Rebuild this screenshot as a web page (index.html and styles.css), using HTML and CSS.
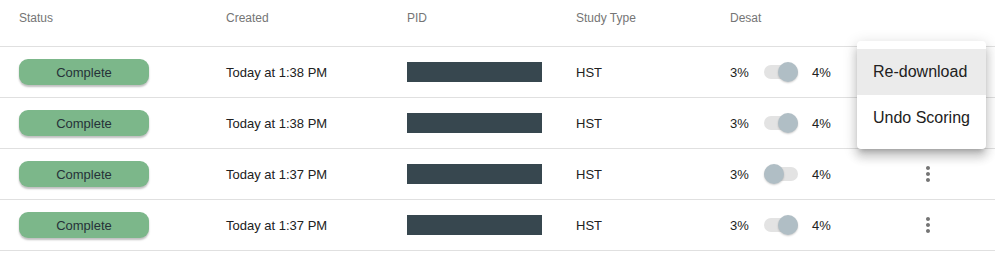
FILE: index.html
```html
<!DOCTYPE html>
<html>
<head>
<meta charset="utf-8">
<link rel="stylesheet" href="styles.css">
</head>
<body>
<div class="page">
  <div class="table">
    <div class="row head">
      <div class="cell">Status</div>
      <div class="cell">Created</div>
      <div class="cell">PID</div>
      <div class="cell">Study Type</div>
      <div class="cell">Desat</div>
      <div class="cell"></div>
    </div>
    <div class="row">
      <div class="cell"><span class="chip">Complete</span></div>
      <div class="cell">Today at 1:38 PM</div>
      <div class="cell"><span class="pid"></span></div>
      <div class="cell">HST</div>
      <div class="cell desat"><span class="pct">3%</span><span class="switch on"><span class="track"></span><span class="thumb"></span></span><span class="pct">4%</span></div>
      <div class="cell"><svg class="kebab" viewBox="0 0 24 24"><path d="M12 8c1.1 0 2-.9 2-2s-.9-2-2-2-2 .9-2 2 .9 2 2 2zm0 2c-1.1 0-2 .9-2 2s.9 2 2 2 2-.9 2-2-.9-2-2-2zm0 6c-1.1 0-2 .9-2 2s.9 2 2 2 2-.9 2-2-.9-2-2-2z"/></svg></div>
    </div>
    <div class="row">
      <div class="cell"><span class="chip">Complete</span></div>
      <div class="cell">Today at 1:38 PM</div>
      <div class="cell"><span class="pid"></span></div>
      <div class="cell">HST</div>
      <div class="cell desat"><span class="pct">3%</span><span class="switch on"><span class="track"></span><span class="thumb"></span></span><span class="pct">4%</span></div>
      <div class="cell"><svg class="kebab" viewBox="0 0 24 24"><path d="M12 8c1.1 0 2-.9 2-2s-.9-2-2-2-2 .9-2 2 .9 2 2 2zm0 2c-1.1 0-2 .9-2 2s.9 2 2 2 2-.9 2-2-.9-2-2-2zm0 6c-1.1 0-2 .9-2 2s.9 2 2 2 2-.9 2-2-.9-2-2-2z"/></svg></div>
    </div>
    <div class="row">
      <div class="cell"><span class="chip">Complete</span></div>
      <div class="cell">Today at 1:37 PM</div>
      <div class="cell"><span class="pid"></span></div>
      <div class="cell">HST</div>
      <div class="cell desat"><span class="pct">3%</span><span class="switch"><span class="track"></span><span class="thumb"></span></span><span class="pct">4%</span></div>
      <div class="cell"><svg class="kebab" viewBox="0 0 24 24"><path d="M12 8c1.1 0 2-.9 2-2s-.9-2-2-2-2 .9-2 2 .9 2 2 2zm0 2c-1.1 0-2 .9-2 2s.9 2 2 2 2-.9 2-2-.9-2-2-2zm0 6c-1.1 0-2 .9-2 2s.9 2 2 2 2-.9 2-2-.9-2-2-2z"/></svg></div>
    </div>
    <div class="row">
      <div class="cell"><span class="chip">Complete</span></div>
      <div class="cell">Today at 1:37 PM</div>
      <div class="cell"><span class="pid"></span></div>
      <div class="cell">HST</div>
      <div class="cell desat"><span class="pct">3%</span><span class="switch on"><span class="track"></span><span class="thumb"></span></span><span class="pct">4%</span></div>
      <div class="cell"><svg class="kebab" viewBox="0 0 24 24"><path d="M12 8c1.1 0 2-.9 2-2s-.9-2-2-2-2 .9-2 2 .9 2 2 2zm0 2c-1.1 0-2 .9-2 2s.9 2 2 2 2-.9 2-2-.9-2-2-2zm0 6c-1.1 0-2 .9-2 2s.9 2 2 2 2-.9 2-2-.9-2-2-2z"/></svg></div>
    </div>
  </div>
  <div class="menu">
    <div class="item active">Re-download</div>
    <div class="item">Undo Scoring</div>
  </div>
</div>
</body>
</html>
```

FILE: styles.css
```css
* { box-sizing: border-box; }
html, body { margin: 0; padding: 0; background: #fff; }
body { font-family: "Liberation Sans", Arial, sans-serif; color: #212121; }
.page { position: relative; width: 995px; height: 258px; }
.table { width: 995px; }
.row {
  display: grid;
  grid-template-columns: 207px 181px 169px 154px 186px 24px 1fr;
  padding-left: 19px;
  height: 51px;
  border-bottom: 1px solid #e0e0e0;
  align-items: center;
  font-size: 13px;
}
.row.head { height: 47px; font-size: 12px; color: #757575; align-items: start; padding-top: 11px; }
.cell { display: flex; align-items: center; }
.chip {
  display: flex; align-items: center; justify-content: center;
  width: 130px; height: 26px; border-radius: 9px;
  background: #7cb78a; color: #263238; font-size: 13px;
  box-shadow: 0 2px 2px rgba(0,0,0,0.25);
}
.pid { display: block; width: 135px; height: 20px; background: #37474f; }
.desat { gap: 0; }
.pct { width: 34px; font-size: 13px; }
.switch { position: relative; width: 34px; height: 20px; margin-right: 14px; display: block; }
.track { position: absolute; left: 0; top: 3px; width: 34px; height: 14px; border-radius: 7px; background: #e3e3e3; }
.thumb {
  position: absolute; top: 0; left: 0; width: 20px; height: 20px; border-radius: 50%;
  background: #b0bec5; box-shadow: 0 1px 2px rgba(0,0,0,0.2);
}
.switch.on .thumb { left: 14px; }
.kebab { width: 24px; height: 24px; fill: #757575; display: block; }
.menu {
  position: absolute; left: 857px; top: 41px; width: 129px;
  background: #fff; border-radius: 4px; padding: 8px 0;
  box-shadow: 0 5px 5px -3px rgba(0,0,0,0.2), 0 8px 10px 1px rgba(0,0,0,0.14), 0 3px 14px 2px rgba(0,0,0,0.12);
}
.item { height: 46px; display: flex; align-items: center; padding: 0 16px; font-size: 16px; color: #212121; white-space: nowrap; }
.item.active { background: #ebebeb; }
```
